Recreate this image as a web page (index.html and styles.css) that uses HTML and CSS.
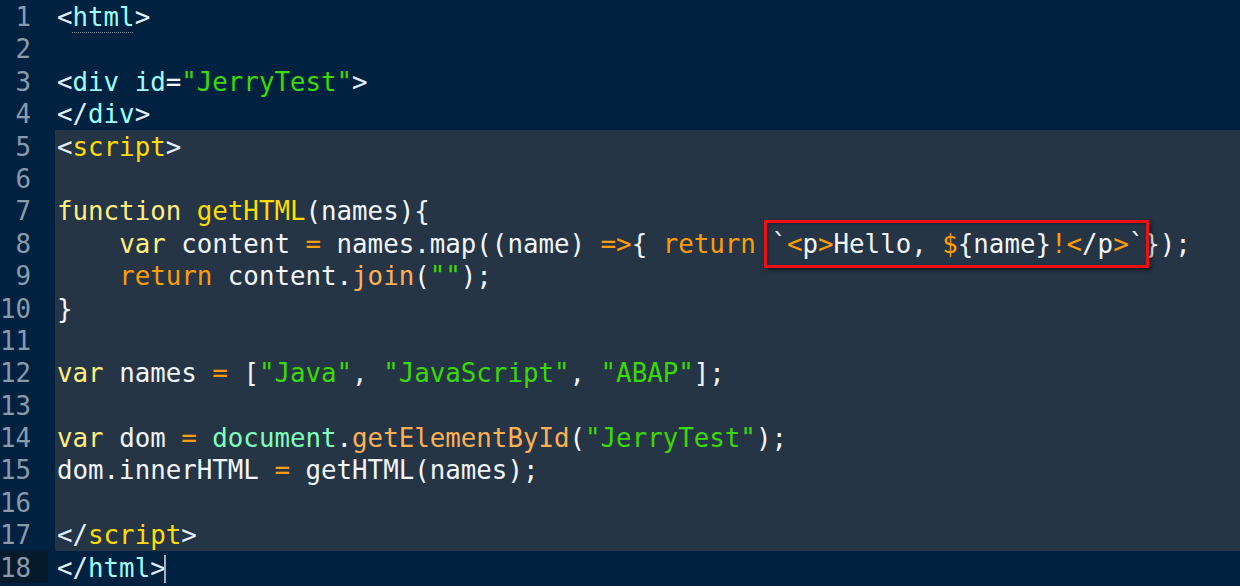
FILE: index.html
```html
<!DOCTYPE html>
<html>
<head>
  <title>JerryTest</title>
  <link rel="stylesheet" href="styles.css">
</head>
<body>
  <div class="editor">
    <div class="row"><span class="num">1</span><span class="code"><span class="pt">&lt;</span><span class="tag dotted">html</span><span class="pt">&gt;</span></span></div>
    <div class="row"><span class="num">2</span><span class="code"></span></div>
    <div class="row"><span class="num">3</span><span class="code"><span class="pt">&lt;</span><span class="tag">div</span> <span class="tag">id</span><span class="wh">=</span><span class="str">"JerryTest"</span><span class="pt">&gt;</span></span></div>
    <div class="row"><span class="num">4</span><span class="code"><span class="pt">&lt;/</span><span class="tag">div</span><span class="pt">&gt;</span></span></div>
    <div class="row sel"><span class="num">5</span><span class="code"><span class="pt">&lt;</span><span class="fn">script</span><span class="pt">&gt;</span></span></div>
    <div class="row sel"><span class="num">6</span><span class="code"></span></div>
    <div class="row sel"><span class="num">7</span><span class="code"><span class="st">function</span> <span class="fn">getHTML</span><span class="wh">(names){</span></span></div>
    <div class="row sel"><span class="num">8</span><span class="code">    <span class="st">var</span> <span class="wh">content</span> <span class="kw">=</span> <span class="wh">names.map((name)</span> <span class="kw">=&gt;</span><span class="wh">{</span> <span class="kw">return</span> <span class="mark"><span class="wh">`</span><span class="kw">&lt;</span><span class="wh">p</span><span class="kw">&gt;</span><span class="wh">Hello, </span><span class="kw">$</span><span class="wh">{name}</span><span class="kw">!&lt;</span><span class="wh">/p</span><span class="kw">&gt;</span><span class="wh">`</span></span><span class="wh">});</span></span></div>
    <div class="row sel"><span class="num">9</span><span class="code">    <span class="kw">return</span> <span class="wh">content.</span><span class="sf">join</span><span class="wh">(</span><span class="str">""</span><span class="wh">);</span></span></div>
    <div class="row sel"><span class="num">10</span><span class="code"><span class="wh">}</span></span></div>
    <div class="row sel"><span class="num">11</span><span class="code"></span></div>
    <div class="row sel"><span class="num">12</span><span class="code"><span class="st">var</span> <span class="wh">names</span> <span class="kw">=</span> <span class="wh">[</span><span class="str">"Java"</span><span class="wh">,</span> <span class="str">"JavaScript"</span><span class="wh">,</span> <span class="str">"ABAP"</span><span class="wh">];</span></span></div>
    <div class="row sel"><span class="num">13</span><span class="code"></span></div>
    <div class="row sel"><span class="num">14</span><span class="code"><span class="st">var</span> <span class="wh">dom</span> <span class="kw">=</span> <span class="cls">document</span><span class="wh">.</span><span class="sf">getElementById</span><span class="wh">(</span><span class="str">"JerryTest"</span><span class="wh">);</span></span></div>
    <div class="row sel"><span class="num">15</span><span class="code"><span class="wh">dom.innerHTML</span> <span class="kw">=</span> <span class="wh">getHTML(names);</span></span></div>
    <div class="row sel"><span class="num">16</span><span class="code"></span></div>
    <div class="row sel"><span class="num">17</span><span class="code"><span class="pt">&lt;/</span><span class="fn">script</span><span class="pt">&gt;</span></span></div>
    <div class="row current"><span class="num">18</span><span class="code"><span class="pt">&lt;/</span><span class="tag dotted">html</span><span class="pt">&gt;</span><span class="caret"></span></span></div>
  </div>
</body>
</html>
```

FILE: styles.css
```css
body {
  margin: 0;
  background-color: #002240;
  font-family: "DejaVu Sans Mono", monospace;
  font-size: 25.8px;
  overflow: hidden;
}
.editor {
  display: flex;
  flex-direction: column;
}
.row {
  display: flex;
  height: 32.4px;
  line-height: 34.4px;
}
.num {
  flex: none;
  width: 55px;
  box-sizing: border-box;
  padding-right: 24px;
  text-align: right;
  color: #8a9aac;
}
.code {
  flex: 1;
  padding-left: 2px;
  white-space: pre;
  color: #ffffff;
}
.sel .code {
  background-color: #253546;
}
.current .num {
  background: linear-gradient(to right, #061a2e 48px, #002240 48px);
}
.pt { color: #e1efff; }
.tag { color: #9effff; }
.wh { color: #f2f6fa; }
.str { color: #3ad900; }
.fn { color: #ffdd00; }
.st { color: #ffee80; }
.kw { color: #ff9d00; }
.sf { color: #ffb054; }
.cls { color: #80ffbb; }
.dotted {
  text-decoration: underline dotted #7f8fa0;
  text-underline-offset: 6px;
  text-decoration-thickness: 1px;
}
.mark {
  position: relative;
}
.mark::after {
  content: "";
  position: absolute;
  top: -9px;
  bottom: -9px;
  left: -7px;
  right: -5px;
  border: 3px solid #ee1111;
  box-shadow: 2px 2px 4px rgba(0, 0, 0, 0.6), inset 1px 1px 3px rgba(0, 0, 0, 0.4);
}
.caret {
  display: inline-block;
  width: 2px;
  height: 28px;
  margin-left: -2px;
  vertical-align: middle;
  background-color: #9fb0c0;
}
```
